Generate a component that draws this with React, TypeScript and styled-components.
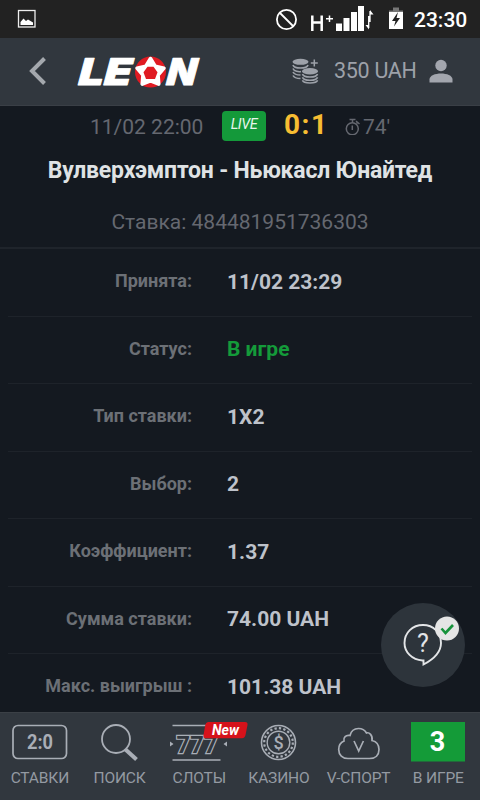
import React from "react";
import styled, { createGlobalStyle } from "styled-components";

const Global = createGlobalStyle`
  * { box-sizing: border-box; }
  body { margin: 0; background: #14191f; font-family: Roboto, sans-serif; }
`;

const Screen = styled.div`
  width: 480px;
  height: 800px;
  display: flex;
  flex-direction: column;
  overflow: hidden;
  background: #141920;
`;

const StatusBar = styled.div`
  height: 38px;
  flex: none;
  display: flex;
  align-items: center;
  background: #222222;
  color: #fff;
  padding: 0 12px 0 17px;
`;
const StatusIcons = styled.svg`
  display: block;
  margin-left: auto;
`;
const Clock = styled.div`
  width: 54px;
  margin-left: 9px;
  padding-top: 2px;
  font-size: 21px;
  line-height: 24px;
  font-weight: 500;
  white-space: nowrap;
`;

const Header = styled.header`
  height: 68px;
  flex: none;
  display: flex;
  align-items: center;
  background: #31373e;
  border-bottom: 1px solid #3a3f46;
  padding: 0 26px 1px 28px;
`;
const Icon = styled.svg`
  display: block;
  flex: none;
`;
const Logo = styled.svg`
  display: block;
  margin-left: 26px;
`;
const Balance = styled.div`
  display: flex;
  align-items: center;
  margin-left: auto;
  color: #9da1a9;
`;
const Amount = styled.span`
  box-sizing: content-box;
  width: 83px;
  padding-left: 14px;
  margin-right: 12px;
  font-size: 21.5px;
  letter-spacing: -0.3px;
  line-height: 26px;
  white-space: nowrap;
`;

const Summary = styled.section`
  height: 143px;
  flex: none;
  display: flex;
  flex-direction: column;
  align-items: center;
  border-bottom: 2px solid #1f242b;
  color: #656870;
`;
const MatchLine = styled.div`
  height: 40px;
  align-self: stretch;
  display: flex;
  align-items: center;
  padding-left: 90px;
  white-space: nowrap;
`;
const DateText = styled.span`
  width: 132px;
  padding-top: 2px;
  font-size: 21px;
`;
const Live = styled.span`
  width: 44px;
  height: 30px;
  border-radius: 4px;
  background: #14993a;
  color: #e8f5ea;
  font-size: 14.5px;
  letter-spacing: -0.4px;
  font-style: italic;
  line-height: 28px;
  text-align: center;
`;
const Score = styled.span`
  box-sizing: content-box;
  width: 61px;
  padding: 0 0 2px 18px;
  color: #f7bd32;
  font-size: 28px;
  line-height: 30px;
  font-weight: 700;
  letter-spacing: 1.5px;
`;
const Minute = styled.span`
  padding-top: 2px;
  margin-left: 2px;
  font-size: 21px;
`;
const Teams = styled.h1`
  margin: 11px 0 0;
  color: #dfe2e4;
  font-size: 23px;
  line-height: 28px;
  font-weight: 700;
  letter-spacing: -0.21px;
  white-space: nowrap;
`;
const BetId = styled.div`
  margin-top: 24px;
  font-size: 21px;
  line-height: 26px;
`;

const Details = styled.dl`
  margin: 0;
  padding: 0 8px;
  flex: 1;
  min-height: 0;
  overflow: hidden;
`;
const Row = styled.div`
  height: 67.5px;
  display: grid;
  grid-template-columns: 184px 1fr;
  column-gap: 35px;
  align-items: center;
  border-bottom: 1px solid #1e232a;
  padding-bottom: 2px;
`;
const Label = styled.dt`
  color: #6c7076;
  font-size: 18px;
  line-height: 24px;
  font-weight: 700;
  text-align: right;
  white-space: nowrap;
`;
const Value = styled.dd<{ $live?: boolean }>`
  margin: 0;
  padding-top: 1px;
  color: ${(p) => (p.$live ? "#149b3a" : "#bec2ca")};
  font-size: 21px;
  line-height: 24px;
  font-weight: 700;
`;

const HelpButton = styled.button`
  position: absolute;
  left: 381px;
  top: 603px;
  width: 84px;
  height: 84px;
  padding: 0;
  border: 0;
  border-radius: 50%;
  background: #2d343b;
`;

const NavBar = styled.nav`
  height: 88px;
  flex: none;
  display: grid;
  grid-template-columns: repeat(6, 79.7px);
  background: #31373e;
  border-top: 1px solid #3b4046;
`;
const NavItem = styled.div`
  display: flex;
  flex-direction: column;
  align-items: center;
`;
const NavArt = styled.svg`
  display: block;
  width: 80px;
  height: 54px;
  overflow: visible;
`;
const NavLabel = styled.span`
  padding-top: 1px;
  font-size: 15.5px;
  line-height: 20px;
  letter-spacing: -0.15px;
  color: #949aa2;
  white-space: nowrap;
`;

const rows: { label: string; value: string; live?: boolean }[] = [
  { label: "Принята:", value: "11/02 23:29" },
  { label: "Статус:", value: "В игре", live: true },
  { label: "Тип ставки:", value: "1X2" },
  { label: "Выбор:", value: "2" },
  { label: "Коэффициент:", value: "1.37" },
  { label: "Сумма ставки:", value: "74.00 UAH" },
  { label: "Макс. выигрыш :", value: "101.38 UAH" },
];

const LINE = "#a9aeb6";

const LeonLogo = () => (
  <Logo width="132" height="44" viewBox="-3 -4 132 44" role="img" aria-label="LEON">
    <g fill="#fff" stroke="#fff" strokeWidth="0.8" strokeLinejoin="round" fontFamily="Inter" fontWeight="900" fontSize="37">
      <text transform="translate(0 31.5) skewX(-15)" x="-1" y="0" textLength="53" lengthAdjust="spacingAndGlyphs">LE</text>
      <text transform="translate(88 31.5) skewX(-15)" x="-1" y="0" textLength="30" lengthAdjust="spacingAndGlyphs">N</text>
    </g>
    <circle cx="73.5" cy="19" r="15.5" fill="#e01a22" />
    <path
      d="M73.5 5.5L78.2 13.1L87 15.2L81.1 22.1L81.8 31.2L73.5 27.8L65.2 31.2L65.9 22.1L60 15.2L68.8 13.1Z"
      fill="#fff" stroke="#fff" strokeWidth="3.5" strokeLinejoin="round"
    />
    <path d="M70.500 13.800h6l4 5.500-2.500 6.700h-9l-2.500-6.700Z" fill="#e01a22" />
  </Logo>
);

const Coins = () => (
  <Icon width="28" height="26" viewBox="0 0 28 26">
    <g fill="none" stroke="#9da1a9" strokeWidth="1.6">
      <path d="M1 7c1 4 14 4 15 0M1 10.500c1 3 6 3.500 8 3M1 14c1 2 5 3 7.500 3M1 17.500c1 2 5 3 7.500 3" />
      <path d="M10.500 16c1 4 14 4 15 0M10.500 19.300c1 4 14 4 15 0M10.500 22.300c1 3.500 14 3.500 15 0" />
      <path d="M22.300 1.500v7M18.800 5h7" strokeWidth="1.500" />
    </g>
    <ellipse cx="8.500" cy="3.800" rx="8" ry="3" fill="#9da1a9" />
    <ellipse cx="18" cy="13.300" rx="8" ry="3.200" fill="#9da1a9" />
  </Icon>
);

const Stopwatch = () => (
  <Icon width="16" height="18" viewBox="0 0 16 18" fill="none" stroke="#656870" strokeWidth="1.5">
    <circle cx="7.300" cy="11.700" r="6" />
    <path d="M4.500 2.500h6M7.500 2.500v3.500M7.300 8.500v4.500M11.500 6.500l1.500-1.500M11 4l3.500 3" />
  </Icon>
);

const BetsIcon = () => (
  <NavArt viewBox="0 0 80 54">
    <rect x="13" y="12.500" width="53.500" height="33" rx="5" fill="none" stroke={LINE} strokeWidth="1.700" />
    <text x="27" y="36" fontFamily="Roboto" fontSize="21" fontWeight="700" fill={LINE} textLength="26" lengthAdjust="spacingAndGlyphs">2:0</text>
  </NavArt>
);
const SearchIcon = () => (
  <NavArt viewBox="0 0 80 54" fill="none" stroke={LINE}>
    <circle cx="36" cy="26" r="14" strokeWidth="1.800" />
    <path d="M45.500 36.500L56.500 46.500" strokeWidth="4" />
  </NavArt>
);
const SlotsIcon = () => (
  <NavArt viewBox="0 0 80 54">
    <path d="M13.500 12.500h48M13.500 47h48" stroke={LINE} strokeWidth="1.600" />
    <path d="M11 28.500v5l3.500-2.500ZM68 28.500v5l-3.500-2.500Z" fill={LINE} />
    <text
      x="17.500" y="39.500" fill="#31373e" stroke={LINE} strokeWidth="2.400" paintOrder="stroke"
      fontFamily="Roboto" fontSize="23.500" fontWeight="700" textLength="41" lengthAdjust="spacing"
    >
      777
    </text>
    <path d="M49 9h37q3 0 2.500 3l-2 10q-.5 3-3.500 3.200h-36q-3 0-2.500-3l1.700-10q.5-3 2.800-3.200Z" fill="#d6121b" />
    <text x="53" y="22" fill="#fff" fontFamily="Roboto" fontSize="14" fontWeight="700" fontStyle="italic" textLength="27" lengthAdjust="spacingAndGlyphs">New</text>
  </NavArt>
);
const CasinoIcon = () => (
  <NavArt viewBox="0 0 80 54" fill="none" stroke={LINE}>
    <circle cx="39.500" cy="29.500" r="17" strokeWidth="1.600" />
    <circle cx="39.500" cy="29.500" r="14.300" strokeWidth="2.200" strokeDasharray="2.300 2.190" />
    <circle cx="39.500" cy="29.500" r="11.300" strokeWidth="1.400" />
    <text x="39.500" y="36" textAnchor="middle" fill={LINE} stroke="none" fontFamily="Roboto" fontSize="18" fontWeight="500">$</text>
  </NavArt>
);
const CloudIcon = () => (
  <NavArt viewBox="0 0 80 54" fill="none" stroke={LINE} strokeWidth="1.700">
    <path d="M29 45.500H50.500C56.500 45.500 60 42 60 36.500C60 31.500 57 28.500 53 27.500C54 22 50 19 47.500 20C45.500 16.500 43 15.500 39.500 15.500C35 15.500 32 18.500 31 22.500C27 21.500 24 24.500 25 28C21.500 29.500 19.700 32.500 19.700 36.500C19.700 42 23.500 45.500 29 45.500Z" />
    <path d="M35 28l4.700 10 4.700-10" />
  </NavArt>
);
const LiveBetsIcon = () => (
  <NavArt viewBox="0 0 80 54">
    <path d="M13 9h54v39.500h-54Z" fill="#149b38" />
    <text x="39.500" y="37.500" textAnchor="middle" fill="#fff" fontFamily="Roboto" fontSize="27" fontWeight="700">3</text>
  </NavArt>
);

const nav = [
  { label: "СТАВКИ", art: <BetsIcon /> },
  { label: "ПОИСК", art: <SearchIcon /> },
  { label: "СЛОТЫ", art: <SlotsIcon /> },
  { label: "КАЗИНО", art: <CasinoIcon /> },
  { label: "V-СПОРТ", art: <CloudIcon /> },
  { label: "В ИГРЕ", art: <LiveBetsIcon /> },
];

export default function App() {
  return (
    <>
      <Global />
      <Screen>
        <StatusBar>
          <Icon width="20" height="20" viewBox="0 0 20 20">
            <rect x="1.500" y="1.500" width="16.500" height="16.500" fill="none" stroke="#eee" strokeWidth="1.300" />
            <path d="M3.500 16v-3l3-3.500 2.500 2.500 2-1.500 5 3v2.500Z" fill="#fff" />
          </Icon>
          <StatusIcons width="130" height="38" viewBox="275 0 130 38">
            <g fill="none" stroke="#fff" strokeWidth="1.800">
              <circle cx="286.500" cy="19.500" r="9.600" />
              <path d="M280 13l13.500 13.500" />
            </g>
            <path d="M312.300 15.500v15.500M321.700 15.500v15.500M312 22.500h10" stroke="#fff" strokeWidth="2.500" />
            <path d="M329.500 15.500v6.500M326 18.800h7" stroke="#fff" strokeWidth="1.500" />
            <path d="M336 23.500h6v7.500h-6zM343.500 18h6v13h-6zM351 12h6v19h-6zM358 6h6v25h-6z" fill="#fff" />
            <path d="M370 11v11M368.700 16v12" stroke="#fff" strokeWidth="1.300" />
            <path d="M370 10l3.500 4.500h-3.500zM369 29.500l-3.500-4.500h3.500z" fill="#fff" />
            <path d="M393 7.500h6v3h4v6h-14v-6h4z" fill="#777" />
            <path d="M389 12h14v17h-14z" fill="#fff" />
            <path d="M398 12l-6 9h3.500l-1.500 5.500 6-8.500h-3.500z" fill="#222" />
          </StatusIcons>
          <Clock>23:30</Clock>
        </StatusBar>

        <Header>
          <Icon width="20" height="30" viewBox="0 0 20 30">
            <path d="M16.500 2.500L4 15L16.500 27.500" fill="none" stroke="#a4a8ad" strokeWidth="4" />
          </Icon>
          <LeonLogo />
          <Balance>
            <Coins />
            <Amount>350 UAH</Amount>
            <Icon width="25" height="25" viewBox="0 0 25 25" fill="#a3a6ae">
              <circle cx="12" cy="6.500" r="5.700" />
              <path d="M.5 23.500v-3c0-8 23-8 23 0v3Z" />
            </Icon>
          </Balance>
        </Header>

        <Summary>
          <MatchLine>
            <DateText>11/02 22:00</DateText>
            <Live>LIVE</Live>
            <Score>0:1</Score>
            <Stopwatch />
            <Minute>74'</Minute>
          </MatchLine>
          <Teams>Вулверхэмптон - Ньюкасл Юнайтед</Teams>
          <BetId>Ставка: 484481951736303</BetId>
        </Summary>

        <Details>
          {rows.map((r) => (
            <Row key={r.label}>
              <Label>{r.label}</Label>
              <Value $live={r.live}>{r.value}</Value>
            </Row>
          ))}
        </Details>

        <NavBar>
          {nav.map((n) => (
            <NavItem key={n.label}>
              {n.art}
              <NavLabel>{n.label}</NavLabel>
            </NavItem>
          ))}
        </NavBar>
      </Screen>

      <HelpButton aria-label="Помощь">
        <Icon width="84" height="84" viewBox="0 0 84 84">
          <path d="M41.500 57.500C31 57 23.500 49 23.500 40C23.500 29.500 31.500 22 42 22C52.500 22 60 29.500 60 40C60 48 55 55 42.500 61.500V57.500Z" fill="none" stroke="#e3e5e7" strokeWidth="1.900" />
          <text x="42" y="48.500" textAnchor="middle" fill="#e3e5e7" fontFamily="Roboto" fontSize="25" fontWeight="400">?</text>
          <circle cx="66" cy="25.500" r="12" fill="#e5e5e5" />
          <path d="M60.500 25.500l4 4.500 7.500-8" fill="none" stroke="#16923a" strokeWidth="2.600" />
        </Icon>
      </HelpButton>
    </>
  );
}
